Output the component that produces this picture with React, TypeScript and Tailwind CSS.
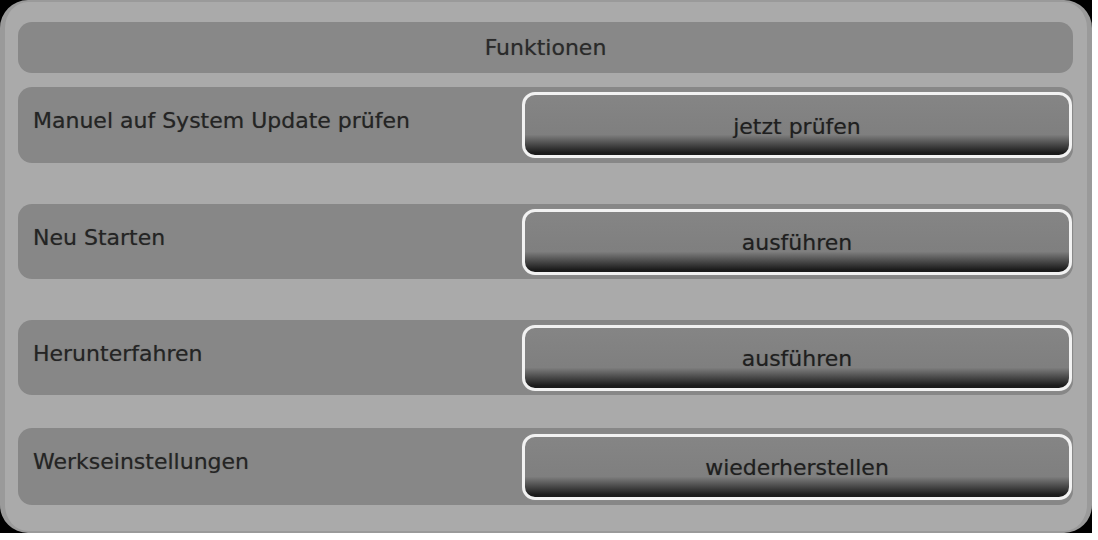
import React from "react";

const font = { fontFamily: '"DejaVu Sans", Verdana, sans-serif' };

function Row({ label, action, mt, h }: { label: string; action: string; mt: string; h: string }) {
  return (
    <div className={`${mt} ${h} flex items-center rounded-[14px] bg-[#878787]`}>
      <div className="flex-1 self-start pl-[15px] pt-[21px] text-[22px] leading-[26px] text-[#242424] [text-shadow:0_0_1px_rgba(0,0,0,0.35)]">{label}</div>
      <div className="mr-[1px] flex h-[66px] w-[550px] items-center justify-center rounded-[13px] border-[3px] border-[#f2f2f2] bg-[linear-gradient(to_bottom,#858585_0%,#7f7f7f_66%,#4a4a4a_82%,#1c1c1c_96%,#1a1a1a_100%)] pt-[3px] text-[22px] leading-[26px] text-[#1f1f1f] shadow-[0_0_1px_1px_#8a8a8a] [text-shadow:0_0_1px_rgba(0,0,0,0.35)]">
        <span>{action}</span>
      </div>
    </div>
  );
}

export default function App() {
  return (
    <div className="h-[540px] w-[1098px] bg-white" style={font}>
      <div className="h-[533px] w-[1092px] bg-black">
        <div className="flex h-full w-full flex-col rounded-[28px] border-x-[5px] border-y-2 border-[#9a9a9a] bg-[#aaaaaa] pl-[13px] pr-[14px] pt-[20px]">
          <div className="flex h-[51px] items-center justify-center rounded-[14px] bg-[#888888] text-[22px] leading-[26px] text-[#2a2a2a] [text-shadow:0_0_1px_rgba(0,0,0,0.35)]">
            Funktionen
          </div>
          <Row label="Manuel auf System Update prüfen" action="jetzt prüfen" mt="mt-[14px]" h="h-[76px]" />
          <Row label="Neu Starten" action="ausführen" mt="mt-[41px]" h="h-[75px]" />
          <Row label="Herunterfahren" action="ausführen" mt="mt-[41px]" h="h-[75px]" />
          <Row label="Werkseinstellungen" action="wiederherstellen" mt="mt-[33px]" h="h-[77px]" />
        </div>
      </div>
    </div>
  );
}
